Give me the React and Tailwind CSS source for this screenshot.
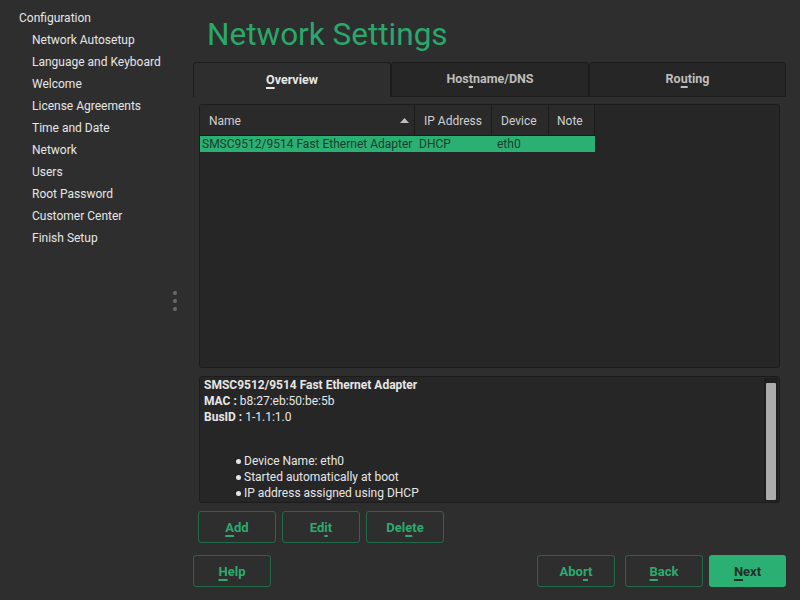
import React from 'react';

const steps = [
  'Network Autosetup',
  'Language and Keyboard',
  'Welcome',
  'License Agreements',
  'Time and Date',
  'Network',
  'Users',
  'Root Password',
  'Customer Center',
  'Finish Setup',
];

// label with one underlined mnemonic letter
function Mn({ text, at }) {
  return (
    <span>
      {text.slice(0, at)}
      <span className="underline underline-offset-[3px] decoration-[1.5px]">{text[at]}</span>
      {text.slice(at + 1)}
    </span>
  );
}

function OutlineButton({ text, at, className = '' }) {
  return (
    <button className={`w-[78px] h-[32px] rounded-[3px] border border-[#1f6b4a] text-[#2cab6f] font-bold text-[13px] flex items-center justify-center pt-[1px] ${className}`}>
      <Mn text={text} at={at} />
    </button>
  );
}

export default function App() {
  return (
    <div
      className="w-[800px] h-[600px] bg-[#2e2e2e] text-[#e6e6e6] flex overflow-hidden"
      style={{ fontFamily: 'Roboto, "Noto Sans", sans-serif' }}
    >
      {/* sidebar */}
      <div className="w-[193px] shrink-0 flex relative">
        <div className="pt-[7px] pl-[19px] text-[12px] leading-[22px]">
          <div>Configuration</div>
          {steps.map((s) => (
            <div key={s} className="pl-[13px]">{s}</div>
          ))}
        </div>
        <div className="absolute left-[173px] top-[291px] flex flex-col gap-[4px]">
          <div className="w-[4px] h-[4px] rounded-full bg-[#6a6a6a]" />
          <div className="w-[4px] h-[4px] rounded-full bg-[#6a6a6a]" />
          <div className="w-[4px] h-[4px] rounded-full bg-[#6a6a6a]" />
        </div>
      </div>

      {/* main */}
      <div className="flex-1 flex flex-col pr-[14px]">
        <h1 className="text-[31.5px] leading-[36px] text-[#2aa86b] pl-[14px] pt-[17px] h-[62px]">
          Network Settings
        </h1>

        {/* tabs */}
        <div className="flex h-[35px] text-[12.5px] font-bold">
          <div className="w-[198px] bg-[#2e2e2e] border border-b-0 border-[#1c1c1c] rounded-t-[3px] flex items-center justify-center text-[#e8e8e8] pt-[1px]">
            <Mn text="Overview" at={0} />
          </div>
          <div className="w-[198px] bg-[#262626] border border-[#1c1c1c] rounded-t-[3px] flex items-center justify-center text-[#bdbdbd]">
            <Mn text="Hostname/DNS" at={3} />
          </div>
          <div className="w-[197px] bg-[#262626] border border-[#1c1c1c] rounded-t-[3px] flex items-center justify-center text-[#bdbdbd]">
            <Mn text="Routing" at={2} />
          </div>
        </div>

        <div className="pl-[6px] pr-[6px] pt-[7px] flex flex-col">
          {/* table */}
          <div className="h-[264px] bg-[#262626] border border-[#1c1c1c] rounded-[3px] text-[12px]">
            <div className="flex h-[31px] text-[#d0d0d0]">
              <div className="w-[215px] border-r border-b border-[#1c1c1c] bg-[#2a2a2a] flex items-center justify-between pl-[9px] pr-[5px] pt-[1px]">
                <span>Name</span>
                <svg width="9" height="5" viewBox="0 0 9 5"><path d="M0 5 L4.5 0 L9 5 Z" fill="#bdbdbd" /></svg>
              </div>
              <div className="w-[77px] border-r border-b border-[#1c1c1c] bg-[#2a2a2a] flex items-center pl-[9px] pt-[1px]">IP Address</div>
              <div className="w-[57px] border-r border-b border-[#1c1c1c] bg-[#2a2a2a] flex items-center pl-[9px] pt-[1px]">Device</div>
              <div className="w-[46px] border-r border-b border-[#1c1c1c] bg-[#2a2a2a] flex items-center pl-[8px] pt-[1px]">Note</div>
            </div>
            <div className="flex h-[16px] w-[395px] bg-[#2bb074] text-[#1f3b2d] items-center">
              <div className="w-[215px] pl-[2px] whitespace-nowrap">SMSC9512/9514 Fast Ethernet Adapter</div>
              <div className="w-[77px] pl-[4px]">DHCP</div>
              <div className="w-[57px] pl-[5px]">eth0</div>
            </div>
          </div>

          {/* details */}
          <div className="mt-[8px] h-[127px] bg-[#262626] border border-[#1c1c1c] rounded-[3px] flex text-[12px] leading-[16px]">
            <div className="flex-1 pl-[4px]">
              <div className="font-bold">SMSC9512/9514 Fast Ethernet Adapter</div>
              <div><span className="font-bold">MAC :</span> b8:27:eb:50:be:5b</div>
              <div><span className="font-bold">BusID :</span> 1-1.1:1.0</div>
              <div className="mt-[28px] pl-[32px]">
                <div className="flex items-center"><span className="w-[5px] h-[5px] rounded-full bg-[#e6e6e6] mr-[3px]" />Device Name: eth0</div>
                <div className="flex items-center"><span className="w-[5px] h-[5px] rounded-full bg-[#e6e6e6] mr-[3px]" />Started automatically at boot</div>
                <div className="flex items-center"><span className="w-[5px] h-[5px] rounded-full bg-[#e6e6e6] mr-[3px]" />IP address assigned using DHCP</div>
              </div>
            </div>
            <div className="w-[14px] mr-[1px] my-[1px] bg-[#1f1f1f] flex flex-col pt-[5px] pb-[1px] px-[2px]">
              <div className="flex-1 bg-[#ababab] rounded-[1px]" />
            </div>
          </div>

          <div className="flex gap-[6px] mt-[8px] -ml-[1px]">
            <OutlineButton text="Add" at={0} />
            <OutlineButton text="Edit" at={2} />
            <OutlineButton text="Delete" at={3} />
          </div>
        </div>

        <div className="flex mt-[12px] items-center">
          <OutlineButton text="Help" at={0} />
          <div className="flex-1" />
          <OutlineButton text="Abort" at={3} />
          <OutlineButton text="Back" at={0} className="ml-[10px]" />
          <button className="ml-[6px] w-[77px] h-[32px] rounded-[3px] bg-[#2bb074] text-[#1f2f27] font-bold text-[13px] flex items-center justify-center pt-[1px]">
            <Mn text="Next" at={0} />
          </button>
        </div>
      </div>
    </div>
  );
}
